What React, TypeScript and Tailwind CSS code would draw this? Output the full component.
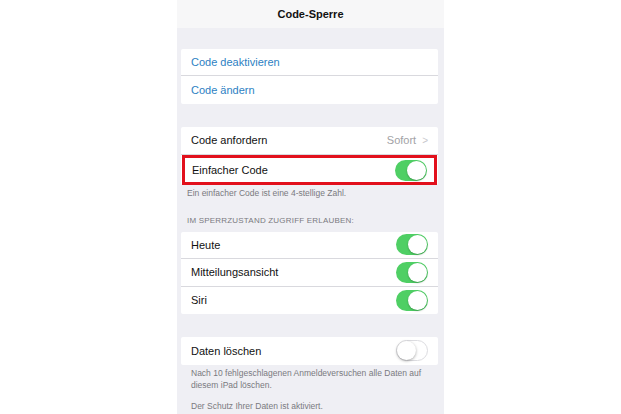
import { ReactNode } from 'react'

// iOS-style "Code-Sperre" settings page

function Toggle({ on }: { on: boolean }) {
  return on ? (
    <div className="w-[32px] h-[21px] rounded-full bg-[#4fcf64] flex items-center justify-end pr-[1px]">
      <div className="w-[19px] h-[19px] rounded-full bg-white shadow-[0_1px_2px_rgba(0,0,0,0.25)]" />
    </div>
  ) : (
    <div className="w-[32px] h-[21px] rounded-full bg-white border border-[#dcdce0] flex items-center">
      <div className="w-[19px] h-[19px] rounded-full bg-white shadow-[0_1px_3px_rgba(0,0,0,0.35)]" />
    </div>
  )
}

function Row({
  children,
  right,
  last,
  h = 'h-[28px]',
}: {
  children: ReactNode
  right?: ReactNode
  last?: boolean
  h?: string
}) {
  return (
    <div className={`${h} flex items-center justify-between pl-[10px] pr-[10px] ${last ? '' : 'border-b border-[#d9d9de]'}`}>
      {children}
      {right}
    </div>
  )
}

export default function App() {
  return (
    <div
      className="w-full h-[414px] bg-white flex justify-center overflow-hidden"
      style={{ fontFamily: '"Liberation Sans", Arial, sans-serif' }}
    >
      <div className="w-[267px] bg-[#efeff4]">
        {/* Header */}
        <div className="h-[28px] bg-[#f7f7f8] flex items-center justify-center">
          <span className="text-[11px] font-bold text-[#111]">Code-Sperre</span>
        </div>

        {/* Card 1 */}
        <div className="mt-[21px] ml-[4px] mr-[6px] bg-white rounded-[2px]">
          <Row h="h-[27px]">
            <span className="text-[11px] text-[#2d7fc3]">Code deaktivieren</span>
          </Row>
          <Row last>
            <span className="text-[11px] text-[#2d7fc3]">Code ändern</span>
          </Row>
        </div>

        {/* Card 2 */}
        <div className="mt-[23px] ml-[4px] mr-[6px] bg-white rounded-[2px]">
          <Row
            right={
              <span className="flex items-center gap-[6px] text-[11px] text-[#a2a2a6]">
                Sofort
                <span className="text-[#c7c7cc] text-[10px]">&gt;</span>
              </span>
            }
          >
            <span className="text-[11px] text-[#111]">Code anfordern</span>
          </Row>
          <div className="h-[30px] border-[3px] border-[#e2101c] ml-[1px] mr-[1px] flex items-center justify-between pl-[7px] pr-[7px]">
            <span className="text-[11px] text-[#111]">Einfacher Code</span>
            <Toggle on />
          </div>
        </div>
        <div className="pl-[10px] pt-[2px] text-[8.5px] text-[#7a7a7f]">
          Ein einfacher Code ist eine 4-stellige Zahl.
        </div>

        {/* Section header */}
        <div className="pl-[10px] mt-[15px] text-[8px] text-[#7a7a7f] uppercase tracking-[0.2px]">
          Im Sperrzustand Zugriff erlauben:
        </div>

        {/* Card 3 */}
        <div className="mt-[5px] ml-[4px] mr-[6px] bg-white rounded-[2px]">
          <Row right={<Toggle on />} h="h-[27px]">
            <span className="text-[11px] text-[#111]">Heute</span>
          </Row>
          <Row right={<Toggle on />}>
            <span className="text-[11px] text-[#111]">Mitteilungsansicht</span>
          </Row>
          <Row right={<Toggle on />} last h="h-[27px]">
            <span className="text-[11px] text-[#111]">Siri</span>
          </Row>
        </div>

        {/* Card 4 */}
        <div className="mt-[23px] ml-[4px] mr-[6px] bg-white rounded-[2px]">
          <Row right={<Toggle on={false} />} last>
            <span className="text-[11px] text-[#111]">Daten löschen</span>
          </Row>
        </div>
        <div className="pl-[14px] pr-[14px] pt-[2px] text-[8.5px] leading-[12px] text-[#7a7a7f]">
          Nach 10 fehlgeschlagenen Anmeldeversuchen alle Daten auf diesem iPad löschen.
        </div>
        <div className="pl-[14px] mt-[9px] text-[8.5px] text-[#7a7a7f]">
          Der Schutz Ihrer Daten ist aktiviert.
        </div>
      </div>
    </div>
  )
}
